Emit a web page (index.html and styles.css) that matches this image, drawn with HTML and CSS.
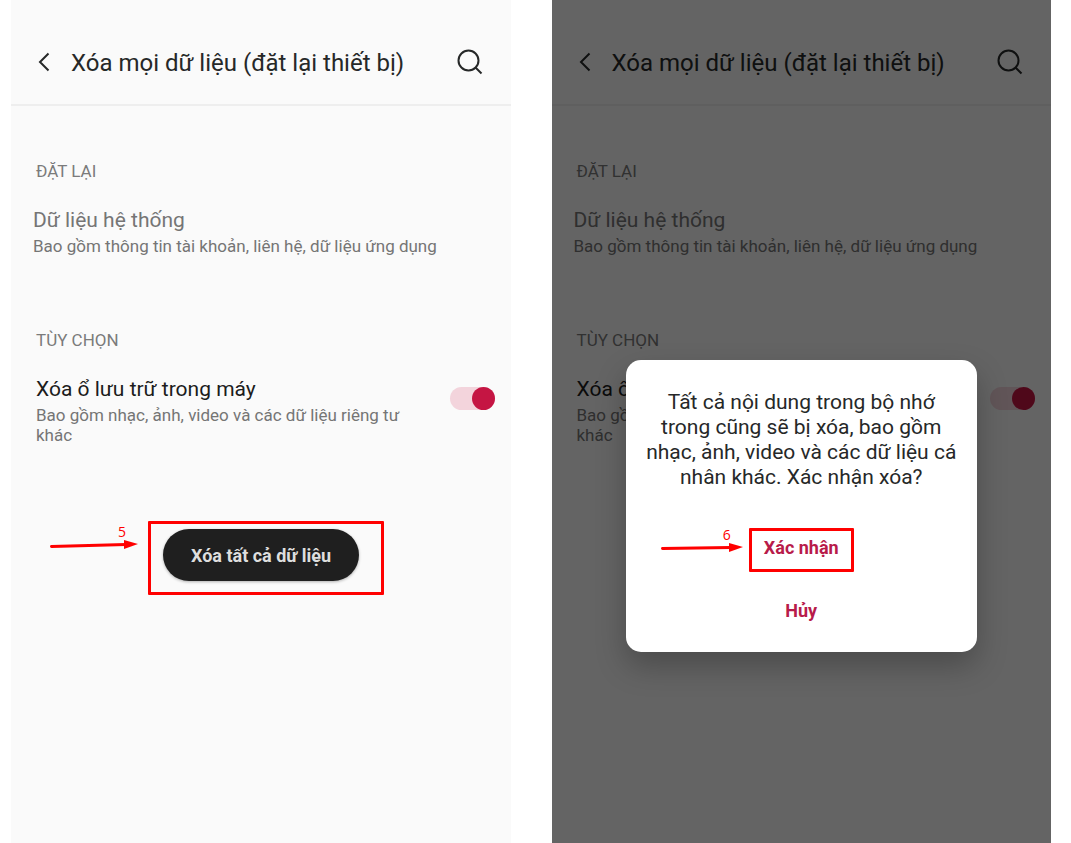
FILE: index.html
```
<!DOCTYPE html>
<html lang="vi">
<head>
    <meta charset="utf-8">
    <meta name="viewport" content="width=device-width, initial-scale=1">
    <title>Xóa mọi dữ liệu</title>
    <link rel="stylesheet" href="styles.css">
</head>
<body>
    <div class="screens">
        <section class="phone">
            <header class="topbar">
                <button class="icon-btn" type="button" aria-label="Quay lại">
                    <svg width="12" height="20" viewBox="0 0 12 20"><path d="M10.500 1.500 2 10l8.500 8.500" class="stroke"/></svg>
                </button>
                <h1>Xóa mọi dữ liệu (đặt lại thiết bị)</h1>
                <button class="icon-btn" type="button" aria-label="Tìm kiếm">
                    <svg width="26" height="26" viewBox="0 0 26 26"><circle cx="11.500" cy="11.500" r="10" class="stroke"/><path d="M18.500 18.500 24.500 24.500" class="stroke"/></svg>
                </button>
            </header>
            <main class="content">
                <h2>ĐẶT LẠI</h2>
                <div class="item">
                    <p class="item-title">Dữ liệu hệ thống</p>
                    <p class="item-text">Bao gồm thông tin tài khoản, liên hệ, dữ liệu ứng dụng</p>
                </div>
                <h2>TÙY CHỌN</h2>
                <div class="item option">
                    <label for="storage">
                        <span class="item-title">Xóa ổ lưu trữ trong máy</span>
                        <span class="item-text">Bao gồm nhạc, ảnh, video và các dữ liệu riêng tư khác</span>
                    </label>
                    <input class="switch" type="checkbox" id="storage" checked>
                </div>
                <div class="step">
                    <div class="marker">
                        <span>5</span>
                        <svg width="88" height="12" viewBox="0 0 88 12"><path d="M1.500 7.500 76 5.500" class="arrow-line"/><path d="M74 1 88 5 74 10z" class="arrow-head"/></svg>
                    </div>
                    <div class="frame frame-wide">
                        <button class="erase" type="button">Xóa tất cả dữ liệu</button>
                    </div>
                </div>
            </main>
        </section>

        <section class="phone">
            <header class="topbar">
                <button class="icon-btn" type="button" aria-label="Quay lại">
                    <svg width="12" height="20" viewBox="0 0 12 20"><path d="M10.500 1.500 2 10l8.500 8.500" class="stroke"/></svg>
                </button>
                <h1>Xóa mọi dữ liệu (đặt lại thiết bị)</h1>
                <button class="icon-btn" type="button" aria-label="Tìm kiếm">
                    <svg width="26" height="26" viewBox="0 0 26 26"><circle cx="11.500" cy="11.500" r="10" class="stroke"/><path d="M18.500 18.500 24.500 24.500" class="stroke"/></svg>
                </button>
            </header>
            <main class="content">
                <h2>ĐẶT LẠI</h2>
                <div class="item">
                    <p class="item-title">Dữ liệu hệ thống</p>
                    <p class="item-text">Bao gồm thông tin tài khoản, liên hệ, dữ liệu ứng dụng</p>
                </div>
                <h2>TÙY CHỌN</h2>
                <div class="item option">
                    <label for="storage2">
                        <span class="item-title">Xóa ổ lưu trữ trong máy</span>
                        <span class="item-text">Bao gồm nhạc, ảnh, video và các dữ liệu riêng tư khác</span>
                    </label>
                    <input class="switch" type="checkbox" id="storage2" checked>
                </div>
            </main>
            <div class="overlay">
                <div class="dialog" role="dialog" aria-labelledby="message">
                    <p id="message">Tất cả nội dung trong bộ nhớ trong cũng sẽ bị xóa, bao gồm nhạc, ảnh, video và các dữ liệu cá nhân khác. Xác nhận xóa?</p>
                    <div class="step step-center">
                        <div class="marker">
                            <span>6</span>
                            <svg width="82" height="12" viewBox="0 0 82 12"><path d="M1.500 6.500 70 5.500" class="arrow-line"/><path d="M68 1 82 5 68 10z" class="arrow-head"/></svg>
                        </div>
                        <div class="frame">
                            <button class="link-btn" type="button">Xác nhận</button>
                        </div>
                    </div>
                    <button class="link-btn" type="button">Hủy</button>
                </div>
            </div>
        </section>
    </div>
</body>
</html>
```
FILE: styles.css
```
* {
    box-sizing: border-box;
}

body {
    margin: 0;
    background-color: #fff;
    font-family: Roboto, sans-serif;
    color: #262828;
}

h1, h2, p {
    margin: 0;
    font-weight: 400;
}

button {
    border: 0;
    padding: 0;
    background: none;
    font-family: inherit;
    cursor: pointer;
}

svg {
    display: block;
}

.screens {
    display: grid;
    grid-template-columns: 1fr 1fr;
    gap: 41px;
    min-height: 100vh;
    padding: 0 20px 0 11px;
}

.phone {
    position: relative;
    background-color: #fafafa;
}

/* top bar */
.topbar {
    display: flex;
    align-items: center;
    padding: 42px 28px 22px 27px;
    border-bottom: 2px solid #eee;
}

.topbar h1 {
    flex: 1;
    margin-left: 21px;
    padding-top: 2px;
    font-size: 24px;
    line-height: 38px;
}

.stroke {
    fill: none;
    stroke: #262828;
    stroke-width: 2;
}

/* settings list */
.content {
    padding: 54px 16px 0 22px;
}

.content h2 {
    padding-left: 3px;
    margin-bottom: 24px;
    font-size: 17px;
    line-height: 22px;
    color: #7b7b7b;
}

.item {
    margin-bottom: 73px;
    color: #757575;
}

.item-title {
    display: block;
    margin-bottom: 2px;
    font-size: 21px;
    line-height: 28px;
}

.item-text {
    display: block;
    font-size: 17px;
    line-height: 20px;
}

.option {
    display: flex;
    align-items: flex-start;
    justify-content: space-between;
    gap: 32px;
    margin-bottom: 76px;
    padding-left: 3px;
}

.option .item-title {
    color: #1c1c1c;
}

.switch {
    appearance: none;
    flex: none;
    display: flex;
    justify-content: flex-end;
    width: 45px;
    height: 23px;
    margin: 12px 0 0;
    border-radius: 12px;
    background-color: #f3d4dc;
}

.switch::before {
    content: "";
    width: 23px;
    height: 23px;
    border-radius: 50%;
    background-color: #c51543;
}

.erase {
    width: 196px;
    height: 52px;
    border-radius: 26px;
    background-color: #1f1f1f;
    box-shadow: 0 1px 3px rgba(0, 0, 0, 0.3);
    color: #dedede;
    font-size: 18px;
    font-weight: 700;
}

/* red step markers */
.step {
    display: flex;
    align-items: flex-start;
    gap: 10px;
    padding-left: 17px;
}

.marker {
    padding-top: 4px;
    font-family: "Open Sans", sans-serif;
    font-size: 14px;
    line-height: 14px;
    color: #f00;
}

.marker span {
    display: block;
    padding-right: 12px;
    text-align: right;
}

.arrow-line {
    fill: none;
    stroke: #f00;
    stroke-width: 3;
    stroke-linecap: round;
}

.arrow-head {
    fill: #f00;
}

.frame {
    padding: 4px 12px 9px;
    border: 3px solid #f00;
    border-radius: 1px;
}

.frame-wide {
    padding: 5px 22px 11px 12px;
}

/* confirm dialog */
.overlay {
    position: absolute;
    inset: 0;
    padding: 360px 74px 0;
    background-color: rgba(0, 0, 0, 0.6);
}

.dialog {
    display: flex;
    flex-direction: column;
    align-items: center;
    padding: 30px 20px 29px;
    border-radius: 15px;
    background-color: #fff;
    box-shadow: 0 14px 30px rgba(0, 0, 0, 0.25);
}

.dialog p {
    margin-bottom: 38px;
    font-size: 21px;
    line-height: 25px;
    text-align: center;
}

.step-center {
    display: grid;
    grid-template-columns: 1fr auto 1fr;
    gap: 6px;
    width: 100%;
    margin-bottom: 26px;
    padding: 0;
}

.step-center .marker {
    justify-self: end;
    padding-top: 0;
}

.link-btn {
    display: block;
    font-size: 18px;
    line-height: 25px;
    font-weight: 700;
    color: #b81b4a;
}
```
